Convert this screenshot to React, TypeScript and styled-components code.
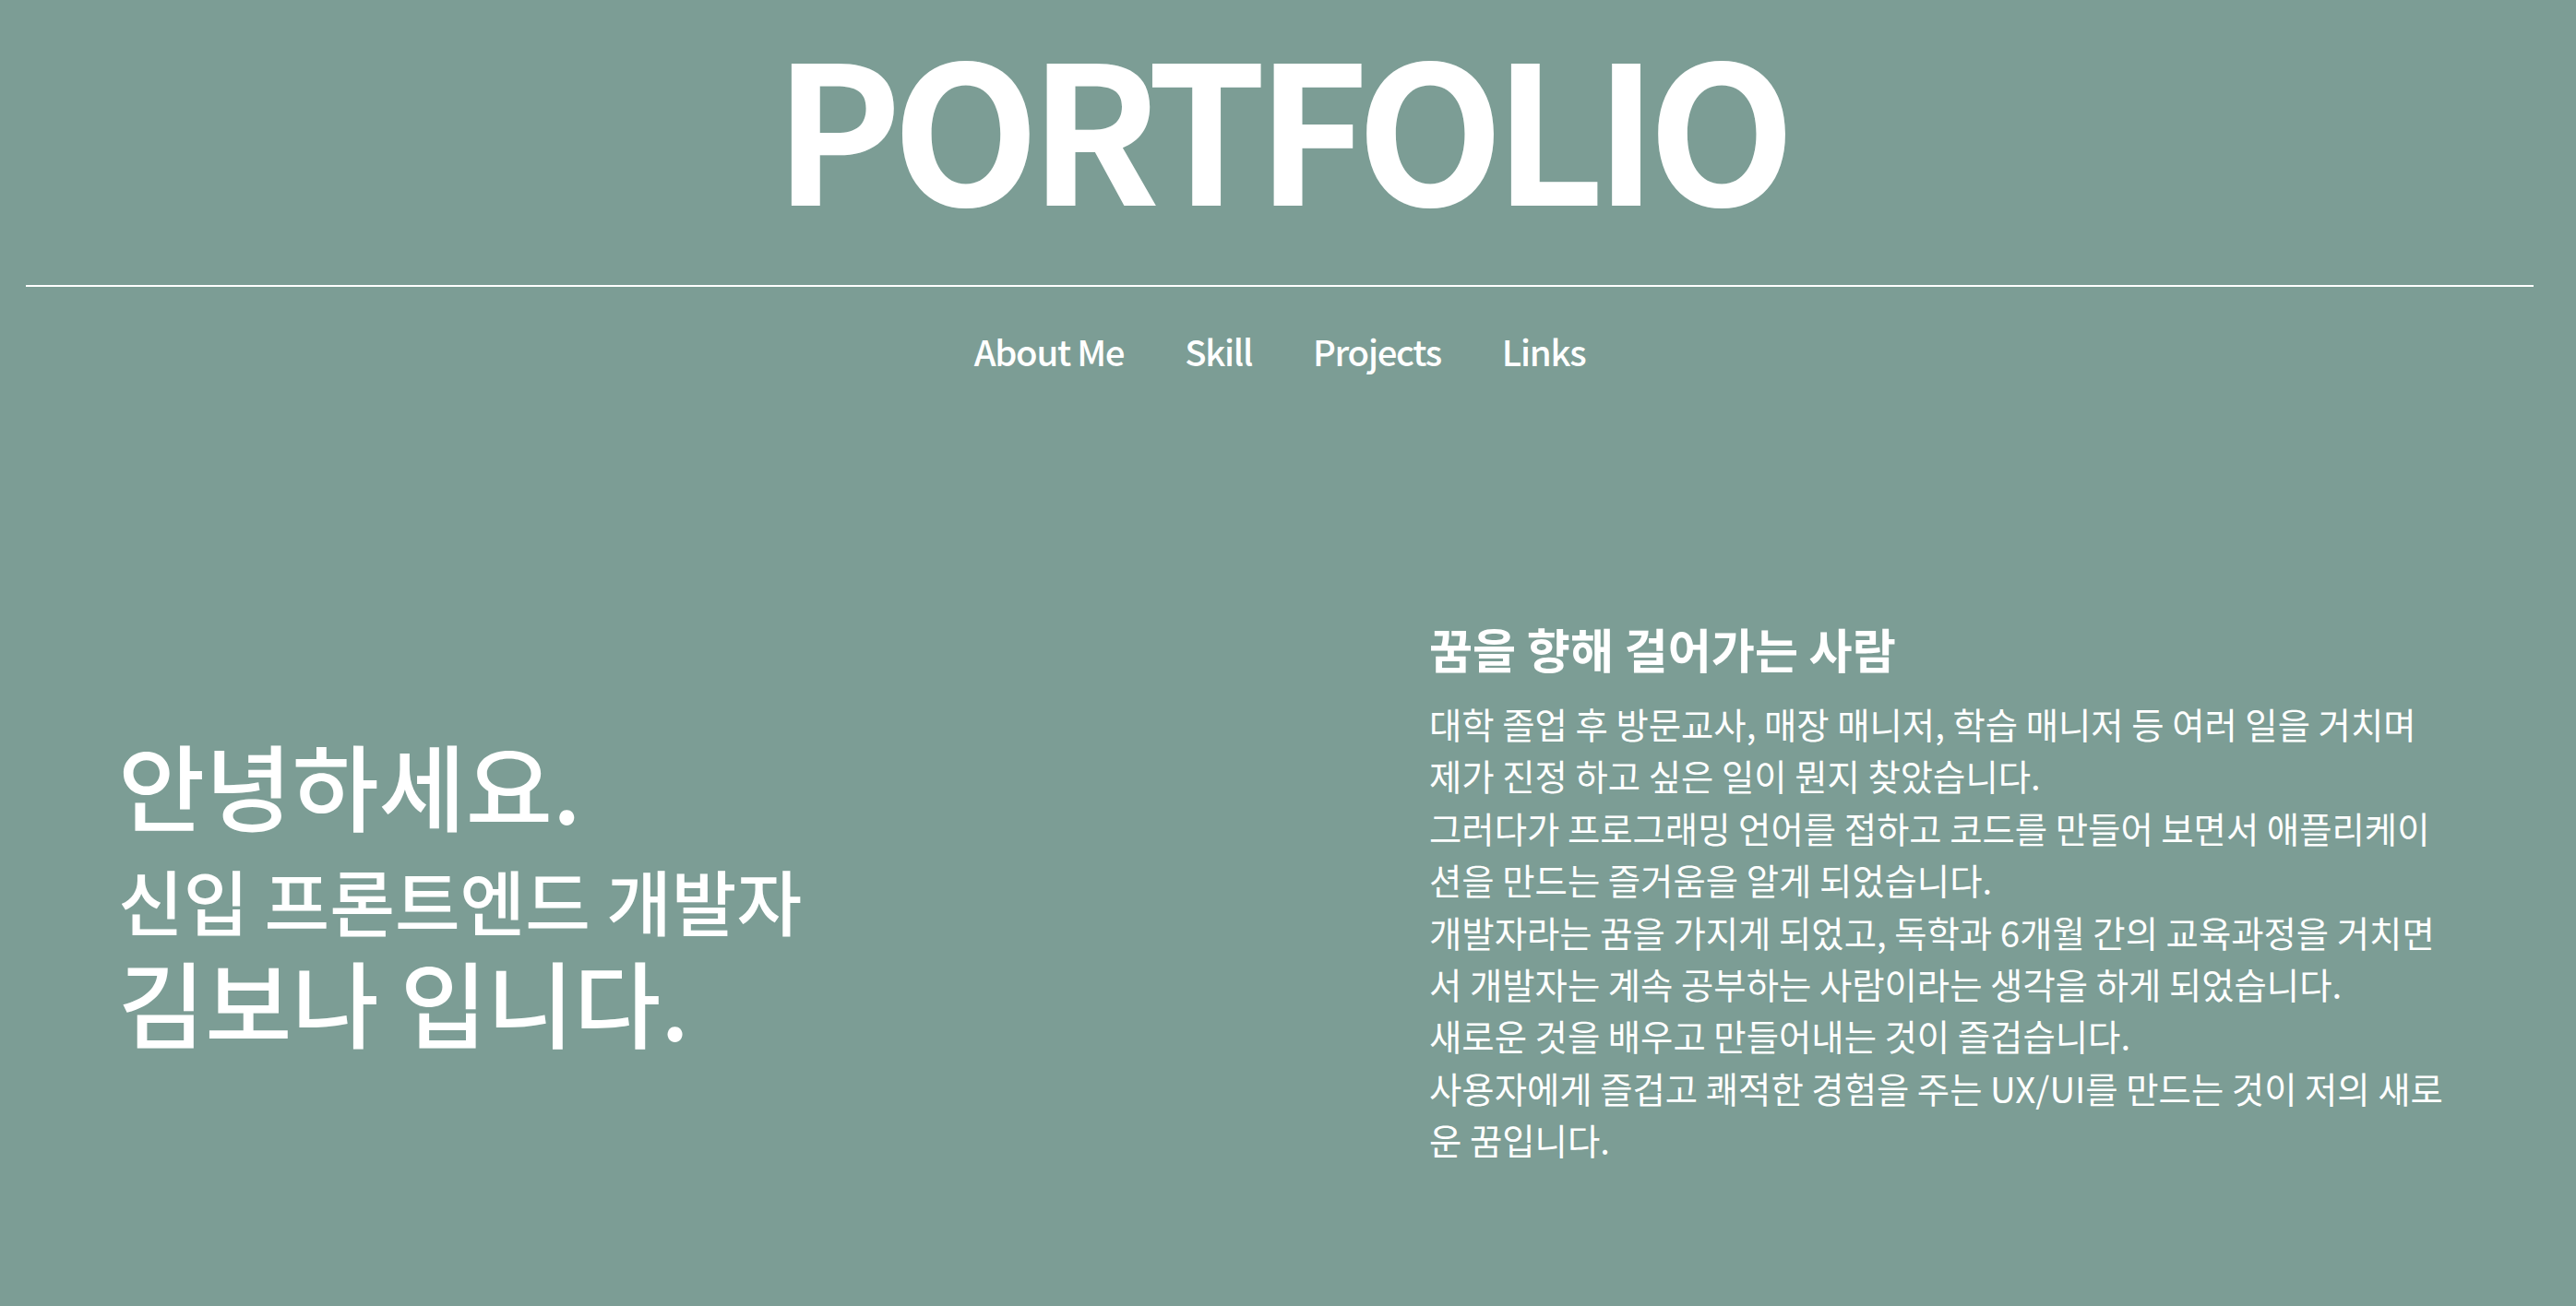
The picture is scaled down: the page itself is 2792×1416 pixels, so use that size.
import React from "react";
import styled, { createGlobalStyle } from "styled-components";

const GlobalStyle = createGlobalStyle`
  html, body {
    margin: 0;
    padding: 0;
    background: #7c9d95;
  }
  body {
    font-family: "Noto Sans CJK KR", "Noto Sans", sans-serif;
    color: #ffffff;
  }
  * { box-sizing: border-box; }
`;

const Page = styled.div`
  min-height: 1416px;
  background: #7c9d95;
  padding: 0 46px 0 28px;
  display: flex;
  flex-direction: column;
`;

const Header = styled.header`
  display: flex;
  flex-direction: column;
  align-items: center;
  padding-top: 8px;
`;

const Title = styled.h1`
  margin: 0;
  font-family: "Noto Sans CJK KR", "Noto Sans", sans-serif;
  font-weight: 700;
  font-size: 208px;
  line-height: 1.2;
  letter-spacing: -11px;
  color: #ffffff;
`;

const Divider = styled.hr`
  width: 100%;
  margin: 51px 0 0;
  border: none;
  height: 2px;
  background: #ffffff;
`;

const Nav = styled.nav`
  display: flex;
  justify-content: center;
  gap: 66px;
  margin-top: 50px;
`;

const NavLink = styled.a`
  font-size: 38.4px;
  line-height: 1;
  font-weight: 500;
  letter-spacing: -1.3px;
  color: #ffffff;
  text-decoration: none;
  cursor: pointer;
`;

const Intro = styled.section`
  display: flex;
  align-items: flex-start;
  padding: 267px 0 0 100px;
`;

const Greeting = styled.div`
  width: 1421px;
  flex-shrink: 0;
  margin-top: 122px;
  display: flex;
  flex-direction: column;
`;

const GreetLine = styled.p<{ $size: number; $gap: number }>`
  margin: ${(p) => p.$gap}px 0 0;
  font-size: ${(p) => p.$size}px;
  line-height: 1.2;
  font-weight: 500;
  color: #ffffff;
`;

const About = styled.div`
  width: 1102px;
  flex-shrink: 0;
`;

const AboutTitle = styled.h2`
  margin: 0 0 16px;
  font-size: 51.2px;
  font-weight: 700;
  color: #ffffff;
`;

const AboutText = styled.p`
  margin: 0;
  font-size: 38.4px;
  line-height: 56.4px;
  font-weight: 400;
  color: #ffffff;
  word-break: break-all;
`;

export default function App() {
  return (
    <>
      <GlobalStyle />
      <Page>
        <Header>
          <Title>PORTFOLIO</Title>
        </Header>
        <Divider />
        <Nav>
          <NavLink>About Me</NavLink>
          <NavLink>Skill</NavLink>
          <NavLink>Projects</NavLink>
          <NavLink>Links</NavLink>
        </Nav>
        <Intro>
          <Greeting>
            <GreetLine $size={102.4} $gap={0}>안녕하세요.</GreetLine>
            <GreetLine $size={76.8} $gap={19}>신입 프론트엔드 개발자</GreetLine>
            <GreetLine $size={102.4} $gap={1}>김보나 입니다.</GreetLine>
          </Greeting>
          <About>
            <AboutTitle>꿈을 향해 걸어가는 사람</AboutTitle>
            <AboutText>
              대학 졸업 후 방문교사, 매장 매니저, 학습 매니저 등 여러 일을 거치며
              <br />
              제가 진정 하고 싶은 일이 뭔지 찾았습니다.
              <br />
              그러다가 프로그래밍 언어를 접하고 코드를 만들어 보면서 애플리케이션을 만드는 즐거움을 알게 되었습니다.
              <br />
              개발자라는 꿈을 가지게 되었고, 독학과 6개월 간의 교육과정을 거치면서 개발자는 계속 공부하는 사람이라는 생각을 하게 되었습니다.
              <br />
              새로운 것을 배우고 만들어내는 것이 즐겁습니다.
              <br />
              사용자에게 즐겁고 쾌적한 경험을 주는 UX/UI를 만드는 것이 저의 새로운 꿈입니다.
            </AboutText>
          </About>
        </Intro>
      </Page>
    </>
  );
}
